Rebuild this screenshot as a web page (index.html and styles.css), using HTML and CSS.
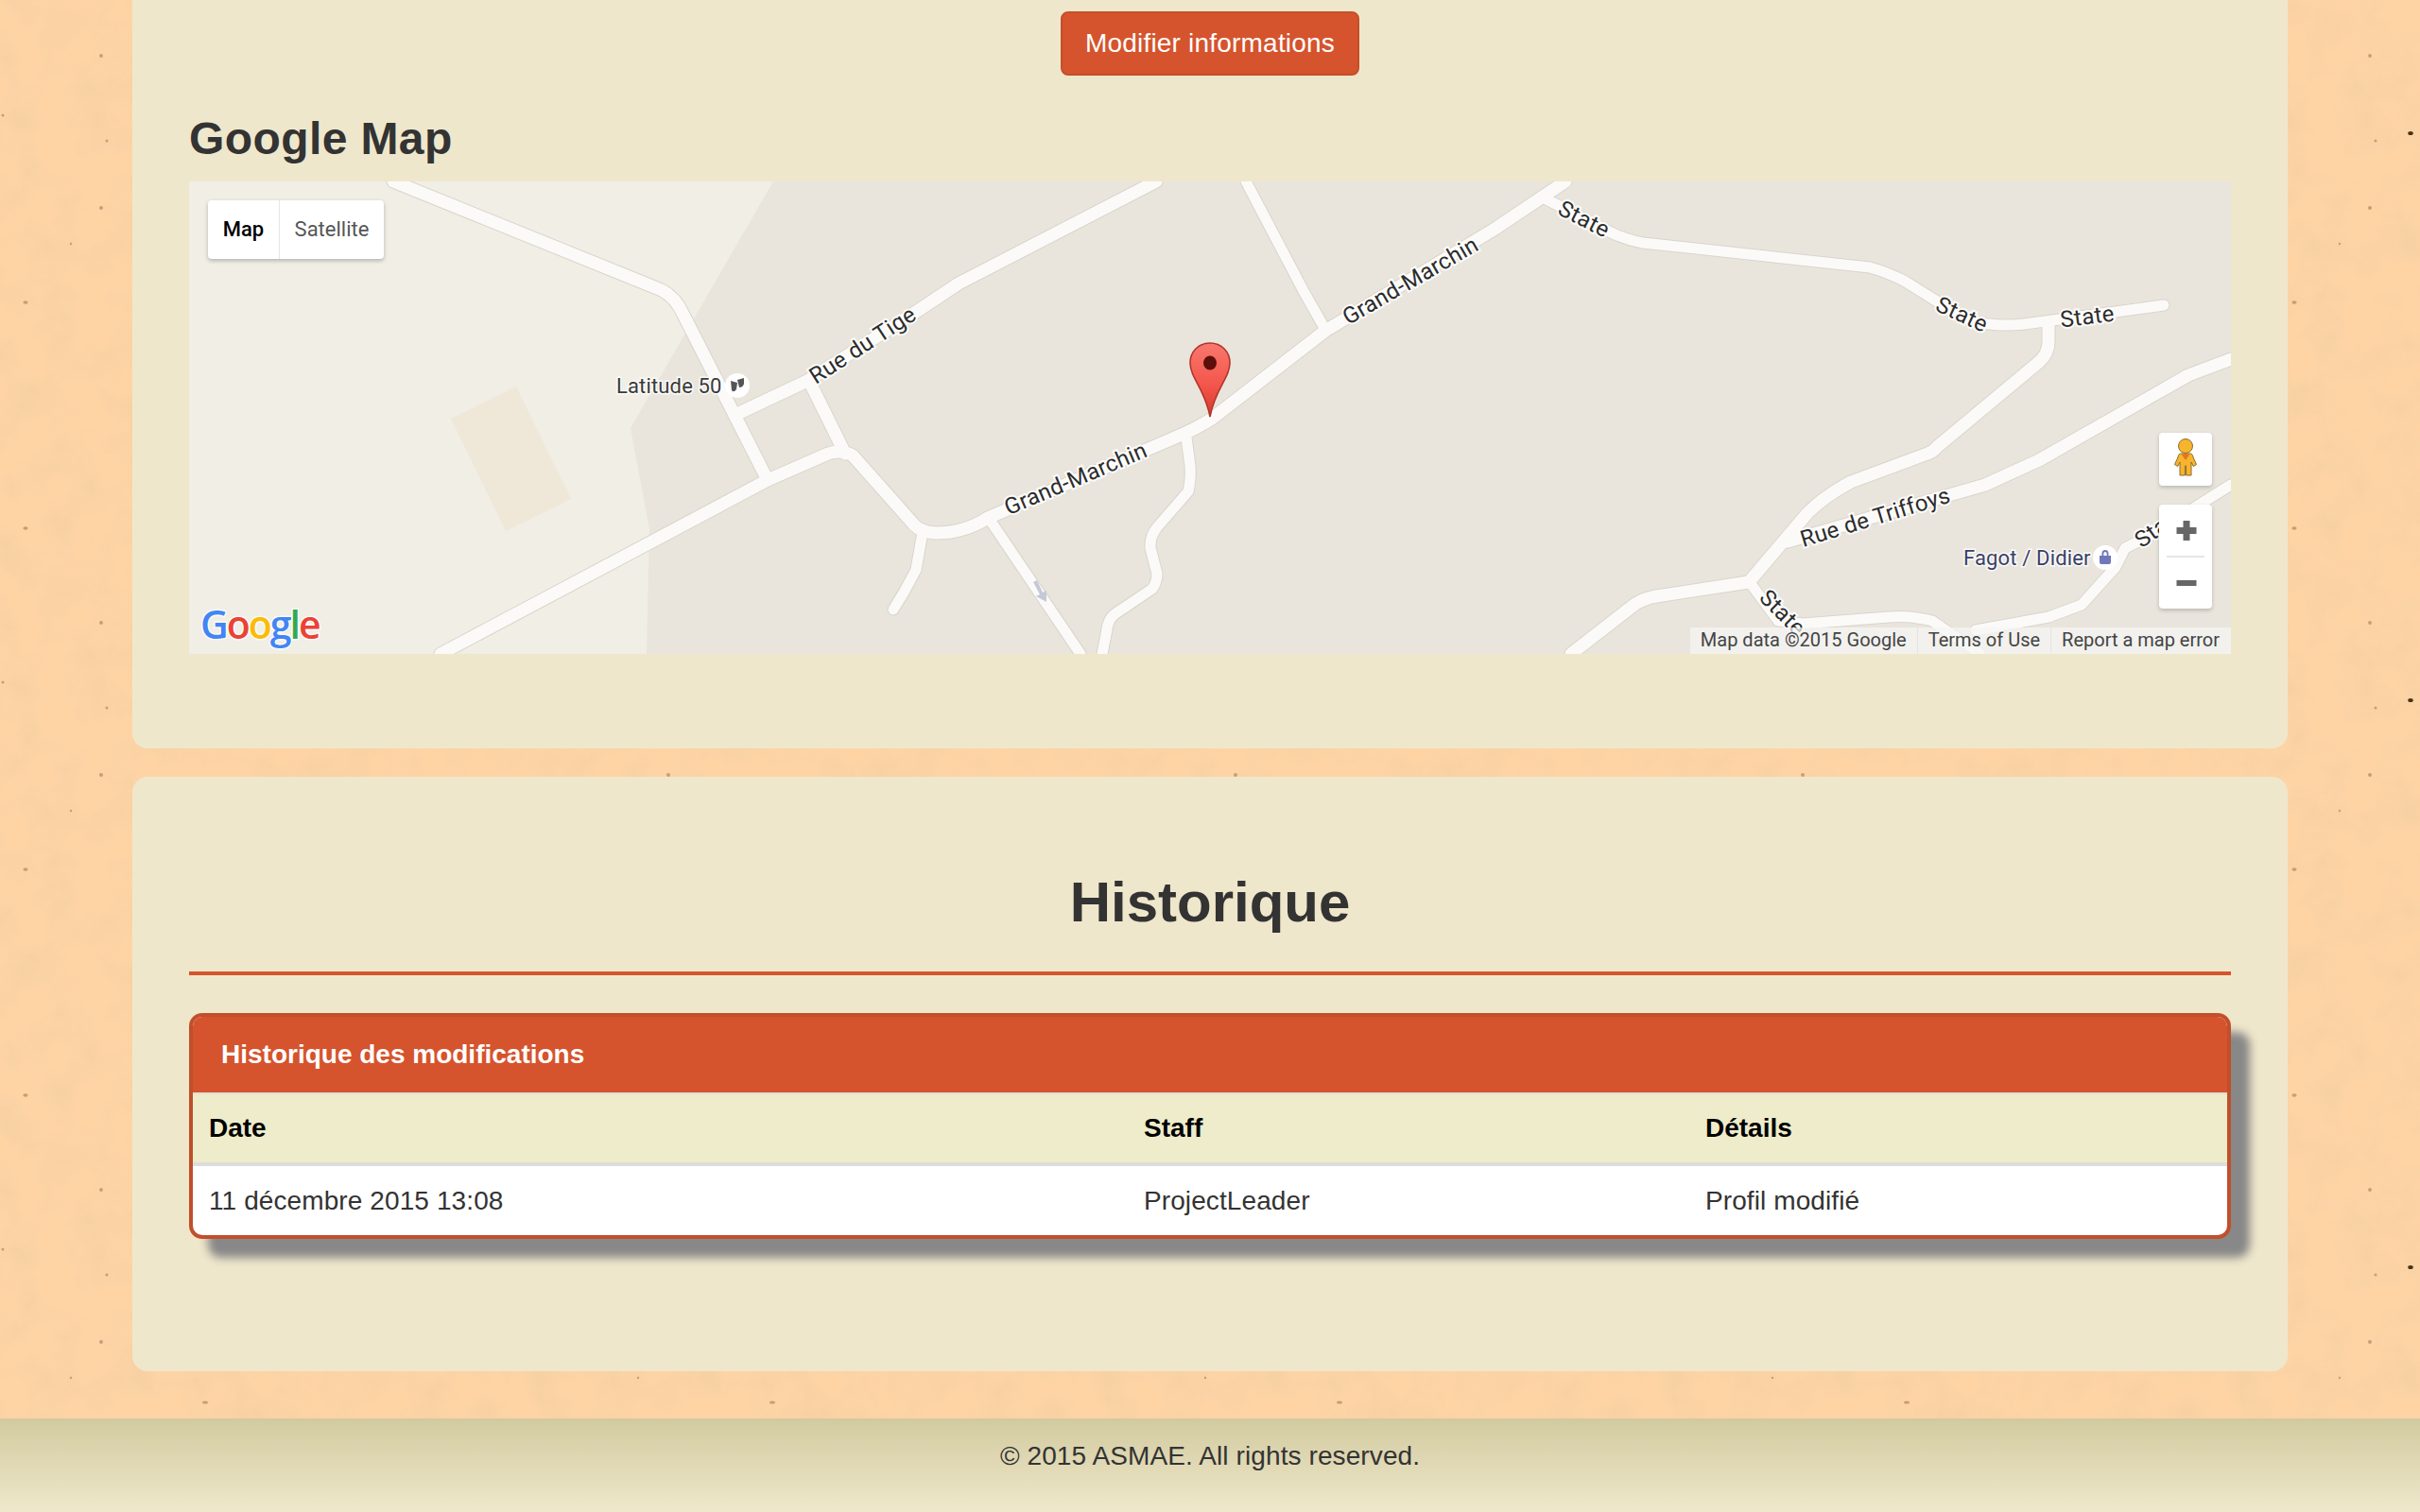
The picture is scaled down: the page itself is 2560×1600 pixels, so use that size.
FILE: index.html
```html
<!DOCTYPE html>
<html lang="fr">
<head>
<meta charset="utf-8">
<title>ASMAE</title>
<link rel="stylesheet" href="styles.css">
</head>
<body>
<svg class="paper" width="2560" height="1600" aria-hidden="true">
  <defs>
    <filter id="grain" x="0" y="0" width="100%" height="100%">
      <feTurbulence type="fractalNoise" baseFrequency="0.025" numOctaves="5" seed="7" stitchTiles="stitch"/>
      <feColorMatrix type="matrix" values="0 0 0 0 0.85  0 0 0 0 0.6  0 0 0 0 0.35  0 0 0 0.9 -0.36"/>
    </filter>
    <filter id="soft" x="-50%" y="-50%" width="200%" height="200%">
      <feGaussianBlur stdDeviation="0.7"/>
    </filter>
    <pattern id="tile" width="600" height="600" patternUnits="userSpaceOnUse">
      <rect class="paper-grain" width="600" height="600" filter="url(#grain)"/>
      <g class="speck" filter="url(#soft)">
        <circle cx="107" cy="59" r="1.9"/><circle cx="3" cy="122" r="1.5"/><circle cx="113" cy="149" r="1.5"/>
        <circle cx="107" cy="220" r="2"/><ellipse cx="27" cy="320" rx="2.6" ry="1.7"/><ellipse cx="27" cy="559" rx="2.6" ry="1.7"/>
        <circle cx="75" cy="258" r="1.2"/><ellipse cx="217" cy="284" rx="3" ry="1.6"/>
      </g>
      <ellipse class="speck-dark" cx="150" cy="141" rx="2.8" ry="2"/>
    </pattern>
  </defs>
  <rect class="paper-base" width="2560" height="1600"/>
  <rect width="2560" height="1600" fill="url(#tile)"/>
</svg>

<div class="page">
  <section class="panel panel-top">
    <a class="btn">Modifier informations</a>
    <h2 class="map-title">Google Map</h2>
    <div class="map">
      <svg class="map-canvas" width="2160" height="500" viewBox="0 0 2160 500">
        <defs>
          <linearGradient id="pin" x1="0" y1="0" x2="0" y2="1">
            <stop offset="0" stop-color="#f8786e"/>
            <stop offset="0.55" stop-color="#f4574c"/>
            <stop offset="1" stop-color="#d8382c"/>
          </linearGradient>
          <g id="roads-major">
            <path d="M216 0 L500 115 Q515 123 523 141 L612 316"/>
            <path d="M266 500 L612 316 L676 288 Q690 283 702 290 L765 361 Q772 371 790 372 Q820 372 845 356 L1050 268 Q1068 260 1082 251 L1202 158 L1380 51 L1456 0"/>
            <path d="M582 245 L654 211 L769 138 L814 108 L1023 0"/>
            <path d="M656 211 L694 288"/>
            <path d="M1691 381 L1900 321 L1957 295 L2115 205 L2160 188"/>
            <path d="M1462 500 L1530 447 Q1540 441 1552 439 L1650 424"/>
            <path d="M1650 424 L1712 351 Q1730 333 1758 318 L1839 288 Q1845 286 1849 281 L1957 191 Q1967 182 1967 170 L1967 153"/>
          </g>
          <g id="roads-minor">
            <path d="M776 371 L769 411 L756 435 L745 453"/>
            <path d="M847 358 L943 500"/>
            <path d="M1055 271 L1059 301 Q1060 315 1057 328 L1024 366 Q1016 376 1017 388 L1024 415 Q1024 424 1019 431 L979 458 Q972 464 971 474 L966 500"/>
            <path d="M1118 0 L1180 118 L1201 155"/>
            <path d="M1434 18 L1502 53 Q1520 62 1538 65 L1778 91 Q1796 96 1814 105 L1854 130 Q1880 150 1905 151 Q1920 153 1941 151 L2038 138 L2089 131"/>
            <path d="M1650 423 L1681 465 L1707 468 L1798 461 Q1820 459 1844 465 L1895 500"/>
            <path d="M1890 475 L1967 461 L2002 448 L2038 408 L2048 388 L2074 375 L2160 321"/>
          </g>
        </defs>
        <rect class="land" width="2160" height="500"/>
        <polygon class="land-light" points="0,0 618,0 467,261 487,368 484,500 0,500"/>
        <polygon class="land-tan" points="346,217 404,336 335,370 277,251"/>

        <g class="road-case major"><use href="#roads-major"/></g>
        <g class="road-case minor"><use href="#roads-minor"/></g>
        <g class="road-fill major"><use href="#roads-major"/></g>
        <g class="road-fill minor"><use href="#roads-minor"/></g>

        <path class="oneway" d="M893 424 L900 437 L896 439 L907 445 L907 433 L903 435 L897 422 Z"/>

        <text class="street" transform="translate(717 180) rotate(-33)">Rue du Tige</text>
        <text class="street" transform="translate(941 322) rotate(-23)">Grand-Marchin</text>
        <text class="street" transform="translate(1296 112) rotate(-30)">Grand-Marchin</text>
        <text class="street" transform="translate(1472 47) rotate(27)">State</text>
        <text class="street" transform="translate(1872 148) rotate(25)">State</text>
        <text class="street" transform="translate(2009 151) rotate(-7)">State</text>
        <text class="street" transform="translate(1786 363) rotate(-17)">Rue de Triffoys</text>
        <text class="street" transform="translate(1680 462) rotate(45)">State</text>
        <text class="street" transform="translate(2089 372) rotate(-35)">State</text>

        <text class="poi" x="452" y="224">Latitude 50</text>
        <circle class="poi-disc" cx="580" cy="216" r="13"/>
        <path class="poi-mask" d="M573 211 L580 213 L579 220 Q576 224 574 221 Z M580 210 L587 208 L587 214 Q586 218 582 218 Z"/>

        <text class="poi poi-blue" x="1877" y="406">Fagot / Didier</text>
        <circle class="poi-disc" cx="2027" cy="398" r="13"/>
        <path class="poi-bag" d="M2021 396 H2033 V403 Q2033 405 2031 405 H2023 Q2021 405 2021 403 Z M2023.5 396 V394 Q2023.5 390 2027 390 Q2030.5 390 2030.5 394 V396 H2028.7 V394 Q2028.7 392 2027 392 Q2025.3 392 2025.3 394 V396 Z"/>

        <g transform="translate(1058 170)">
          <path class="pin-body" d="M22 1 C10 1 1 10 1 22 C1 38 17 50 22 79 C27 50 43 38 43 22 C43 10 34 1 22 1 Z"/>
          <ellipse class="pin-dot" cx="22" cy="22" rx="7" ry="7.5"/>
        </g>

        <text class="g-logo" x="12" y="484"><tspan class="g-blue">G</tspan><tspan class="g-red">o</tspan><tspan class="g-yellow">o</tspan><tspan class="g-blue">g</tspan><tspan class="g-green">l</tspan><tspan class="g-red">e</tspan></text>
      </svg>

      <div class="map-type">
        <span class="map-type-btn is-active">Map</span>
        <span class="map-type-btn">Satellite</span>
      </div>

      <div class="pegman">
        <svg width="56" height="56" viewBox="0 0 56 56">
          <circle class="peg-body" cx="28" cy="14" r="7.5"/>
          <path class="peg-body" d="M22.5 22 H33.5 C35 22 35.5 24 36.5 27 L39.5 33.5 L36.3 35.5 L34 31 V45 H28.6 V35 H27.4 V45 H22 V31 L19.7 35.5 L16.5 33.5 L19.5 27 C20.5 24 21 22 22.5 22 Z"/>
          <path class="peg-scarf" d="M23.5 22.5 H32.5 L28 29 Z"/>
        </svg>
      </div>

      <div class="zoom-ctl">
        <svg width="56" height="110" viewBox="0 0 56 110">
          <path class="zoom-sign" d="M25.5 17 H32.5 V24 H39.5 V31 H32.5 V38 H25.5 V31 H18.5 V24 H25.5 Z"/>
          <rect class="zoom-sep" x="8" y="54" width="40" height="2"/>
          <rect class="zoom-sign" x="18.5" y="80" width="21" height="6"/>
        </svg>
      </div>

      <div class="attribution">
        <span class="attr-item">Map data ©2015 Google</span>
        <span class="attr-item">Terms of Use</span>
        <span class="attr-item">Report a map error</span>
      </div>
    </div>
  </section>

  <section class="panel panel-history">
    <h1 class="section-title">Historique</h1>
    <hr class="rule">
    <div class="card">
      <div class="card-head">Historique des modifications</div>
      <table class="log">
        <thead>
          <tr><th class="col-date">Date</th><th class="col-staff">Staff</th><th class="col-detail">Détails</th></tr>
        </thead>
        <tbody>
          <tr><td>11 décembre 2015 13:08</td><td>ProjectLeader</td><td>Profil modifié</td></tr>
        </tbody>
      </table>
    </div>
  </section>

  <footer class="footer">© 2015 ASMAE. All rights reserved.</footer>
</div>
</body>
</html>
```

FILE: styles.css
```css
* { box-sizing: border-box; }
html, body { margin: 0; padding: 0; }
body {
  width: 2560px;
  height: 1600px;
  overflow: hidden;
  position: relative;
  background: #fed3a3;
  font-family: "Liberation Sans", Arial, sans-serif;
  font-size: 28px;
  color: #333;
}

/* paper texture under everything */
.paper { position: absolute; left: 0; top: 0; z-index: 0; display: block; }
.paper-base { fill: #fed4a5; }
.paper-grain { fill: #fff; }
.speck circle, .speck ellipse { fill: #a07c58; opacity: .6; }
.speck-dark { fill: #4a3418; }

.page {
  position: relative;
  z-index: 1;
  display: flex;
  flex-direction: column;
  height: 1600px;
}

.panel {
  margin: 0 140px;
  padding: 0 60px;
  background: #efe7cb;
}
.panel-top {
  padding-top: 12px;
  padding-bottom: 100px;
  border-radius: 0 0 16px 16px;
  display: flex;
  flex-direction: column;
}
.panel-history {
  margin-top: 30px;
  padding-top: 100px;
  padding-bottom: 140px;
  border-radius: 16px;
}

.btn {
  align-self: center;
  width: 316px;
  height: 68px;
  display: flex;
  align-items: center;
  justify-content: center;
  background: #d5542d;
  border: 2px solid #c44f2a;
  border-radius: 8px;
  color: #fff;
  font-size: 28px;
  letter-spacing: .2px;
}

.map-title {
  margin: 41px 0 19px;
  font-size: 48px;
  line-height: 52px;
  font-weight: 700;
  letter-spacing: .4px;
  color: #333;
}

/* map */
.map {
  position: relative;
  width: 2160px;
  height: 500px;
  overflow: hidden;
}
.map-canvas { display: block; }
.land { fill: #e9e5dc; }
.land-light { fill: #f0eee5; }
.land-tan { fill: #efe7d8; }
.road-case, .road-fill { fill: none; stroke-linecap: round; stroke-linejoin: round; }
.road-case { stroke: #d8d5cb; }
.road-fill { stroke: #fbfaf8; }
.road-case.major { stroke-width: 15px; }
.road-fill.major { stroke-width: 13px; }
.road-case.minor { stroke-width: 13px; }
.road-fill.minor { stroke-width: 11px; }
.oneway { fill: #c5c9d6; }

.street {
  font-family: Roboto, "Liberation Sans", sans-serif;
  font-size: 24px;
  text-anchor: middle;
  fill: #2c2c2c;
  stroke: rgba(255, 255, 255, .85);
  stroke-width: 4px;
  paint-order: stroke;
  letter-spacing: .3px;
}
.poi {
  font-family: Roboto, "Liberation Sans", sans-serif;
  font-size: 22px;
  letter-spacing: .15px;
  fill: #3a3a3a;
  stroke: rgba(255, 255, 255, .8);
  stroke-width: 3px;
  paint-order: stroke;
}
.poi-blue { fill: #3a3f68; }
.poi-disc { fill: #fff; }
.poi-mask { fill: #555; }
.poi-bag { fill: #6e78bb; }

.pin-body { fill: url(#pin); stroke: #b3342a; stroke-width: 1.6px; }
.pin-dot { fill: #5c0f0b; }

.g-logo {
  font-family: "Open Sans", "Noto Sans", sans-serif;
  font-size: 41px;
  font-weight: 600;
  letter-spacing: -2px;
  stroke: rgba(255, 255, 255, .75);
  stroke-width: 3px;
  paint-order: stroke;
}
.g-blue { fill: #4285f4; }
.g-red { fill: #ea4335; }
.g-yellow { fill: #fbbc05; }
.g-green { fill: #34a853; }

.map-type {
  position: absolute;
  left: 20px;
  top: 20px;
  display: flex;
  height: 62px;
  background: #fff;
  border-radius: 4px;
  box-shadow: 0 2px 4px rgba(0, 0, 0, .25);
  font-family: Roboto, "Liberation Sans", sans-serif;
  font-size: 22px;
}
.map-type-btn {
  display: flex;
  align-items: center;
  justify-content: center;
  width: 110px;
  padding-bottom: 2px;
  color: #565656;
}
.map-type-btn.is-active {
  width: 76px;
  color: #000;
  font-weight: 500;
  border-right: 1px solid #e6e6e6;
}

.pegman, .zoom-ctl {
  position: absolute;
  left: 2084px;
  width: 56px;
  background: #fff;
  border-radius: 4px;
  box-shadow: 0 2px 4px rgba(0, 0, 0, .2);
}
.pegman { top: 266px; height: 56px; }
.zoom-ctl { top: 342px; height: 110px; }
.pegman svg, .zoom-ctl svg { display: block; }
.peg-body { fill: #f9b42d; stroke: #8a6d2c; stroke-width: 1px; }
.peg-scarf { fill: #e0781d; }
.zoom-sign { fill: #666; }
.zoom-sep { fill: #e6e6e6; }

.attribution {
  position: absolute;
  right: 0;
  bottom: 0;
  height: 28px;
  display: flex;
  align-items: center;
  padding-right: 1px;
  background: rgba(245, 245, 245, .72);
  font-family: Roboto, "Liberation Sans", sans-serif;
  font-size: 20px;
  color: #444;
}
.attr-item {
  height: 28px;
  line-height: 26px;
  padding: 0 11px;
  border-left: 1px solid #e4e4e0;
}
.attr-item:first-child { border-left: 0; }

/* history */
.section-title {
  margin: 0;
  font-size: 60px;
  line-height: 66px;
  font-weight: 700;
  text-align: center;
  color: #333;
}
.rule {
  margin: 40px 0 0;
  height: 4px;
  border: 0;
  background: #d5542d;
}
.card {
  margin-top: 40px;
  border: 4px solid #c14f2b;
  border-radius: 14px;
  overflow: hidden;
  background: #fff;
  box-shadow: 20px 20px 10px #888;
}
.card-head {
  height: 80px;
  line-height: 80px;
  padding-left: 30px;
  background: #d5542d;
  color: #fff;
  font-size: 28px;
  font-weight: 700;
}
.log {
  width: 100%;
  border-collapse: collapse;
  table-layout: fixed;
  font-size: 28px;
}
.log th {
  height: 75px;
  padding: 0 17px;
  background: #eeecca;
  border-top: 2px solid #e3e0d0;
  border-bottom: 4px solid #ddd;
  color: #000;
  font-weight: 700;
  text-align: left;
}
.log td {
  height: 75px;
  padding: 0 17px;
  color: #333;
  letter-spacing: .1px;
}
.col-date { width: 989px; }
.col-staff { width: 594px; }

.footer {
  margin-top: 50px;
  height: 100px;
  padding-bottom: 20px;
  display: flex;
  align-items: center;
  justify-content: center;
  background: linear-gradient(#d2ca9f, #efe8cb);
  color: #333;
  font-size: 28px;
  letter-spacing: .1px;
}
```
